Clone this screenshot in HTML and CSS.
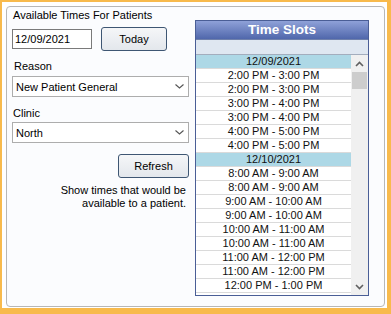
FILE: index.html
```html
<!DOCTYPE html>
<html>
<head>
<meta charset="utf-8">
<link rel="stylesheet" href="styles.css">
</head>
<body>
<div class="frame">
  <div class="panel">
    <div class="left">
      <div class="title">Available Times For Patients</div>
      <div class="date-row">
        <div class="textbox">12/09/2021</div>
        <div class="button today">Today</div>
      </div>
      <div class="label reason-label">Reason</div>
      <div class="combo combo-first">
        <span>New Patient General</span>
        <svg class="chev" width="9" height="5" viewBox="0 0 9 5"><path d="M0.5 0.5 L4.5 4 L8.5 0.5" fill="none" stroke="#555" stroke-width="1.1"/></svg>
      </div>
      <div class="label clinic-label">Clinic</div>
      <div class="combo combo-second">
        <span>North</span>
        <svg class="chev" width="9" height="5" viewBox="0 0 9 5"><path d="M0.5 0.5 L4.5 4 L8.5 0.5" fill="none" stroke="#555" stroke-width="1.1"/></svg>
      </div>
      <div class="button refresh">Refresh</div>
      <div class="note">Show times that would be<br>available to a patient.</div>
    </div>
    <div class="right">
      <div class="grid">
        <div class="grid-title">Time Slots</div>
        <div class="grid-colhead"></div>
        <div class="grid-body">
          <div class="rows">
            <div class="row date">12/09/2021</div>
            <div class="row">2:00 PM - 3:00 PM</div>
            <div class="row">2:00 PM - 3:00 PM</div>
            <div class="row">3:00 PM - 4:00 PM</div>
            <div class="row">3:00 PM - 4:00 PM</div>
            <div class="row">4:00 PM - 5:00 PM</div>
            <div class="row">4:00 PM - 5:00 PM</div>
            <div class="row date">12/10/2021</div>
            <div class="row">8:00 AM - 9:00 AM</div>
            <div class="row">8:00 AM - 9:00 AM</div>
            <div class="row">9:00 AM - 10:00 AM</div>
            <div class="row">9:00 AM - 10:00 AM</div>
            <div class="row">10:00 AM - 11:00 AM</div>
            <div class="row">10:00 AM - 11:00 AM</div>
            <div class="row">11:00 AM - 12:00 PM</div>
            <div class="row">11:00 AM - 12:00 PM</div>
            <div class="row">12:00 PM - 1:00 PM</div>
            <div class="row"></div>
          </div>
          <div class="scrollbar">
            <div class="arrow">
              <svg width="9" height="6" viewBox="0 0 9 6"><path d="M1 5 L4.5 1.5 L8 5" fill="none" stroke="#606060" stroke-width="1.6"/></svg>
            </div>
            <div class="thumb"></div>
            <div class="track"></div>
            <div class="arrow">
              <svg width="9" height="6" viewBox="0 0 9 6"><path d="M1 1 L4.5 4.5 L8 1" fill="none" stroke="#606060" stroke-width="1.6"/></svg>
            </div>
          </div>
        </div>
      </div>
    </div>
  </div>
</div>
</body>
</html>
```
FILE: styles.css
```css
html, body {
  margin: 0;
  padding: 0;
  background: #ffffff;
}

body {
  font-family: "Liberation Sans", Arial, sans-serif;
  font-size: 11px;
  color: #000;
}

.frame {
  width: 391px;
  height: 314px;
  box-sizing: border-box;
  border-style: solid;
  border-color: #f8ba4c;
  border-width: 2px 4px 6px 2px;
  padding: 4px 2px 1px 4px;
  background: #ffffff;
}

.panel {
  height: 100%;
  box-sizing: border-box;
  border: 1px solid #b7b7b7;
  border-radius: 4px;
  background: #fbfcfe;
  display: flex;
  padding: 2px 0 0 5px;
}

.left {
  width: 177px;
  display: flex;
  flex-direction: column;
}

.title {
  line-height: 13px;
  padding-left: 1px;
}

.date-row {
  display: flex;
  align-items: flex-start;
  margin-top: 5px;
}

.textbox {
  width: 80px;
  height: 20px;
  box-sizing: border-box;
  border: 1px solid #7a7a7a;
  background: #fff;
  margin-top: 2px;
  padding-left: 2px;
  line-height: 18px;
}

.button {
  height: 24px;
  box-sizing: border-box;
  border: 1px solid #3e5673;
  border-radius: 3px;
  background: linear-gradient(#f5f6f8, #e3e7ec);
  text-align: center;
  line-height: 22px;
}

.today {
  width: 66px;
  margin-left: 9px;
}

.label {
  line-height: 13px;
  padding-left: 2px;
}

.reason-label {
  margin-top: 9px;
}

.clinic-label {
  margin-top: 10px;
  padding-left: 1px;
}

.combo {
  height: 21px;
  box-sizing: border-box;
  border: 1px solid #adadad;
  background: #fff;
  display: flex;
  align-items: center;
  justify-content: space-between;
  padding: 0 4px 0 3px;
}

.combo-first {
  margin-top: 3px;
}

.combo-second {
  margin-top: 2px;
}

.chev {
  display: block;
}

.refresh {
  width: 71px;
  align-self: flex-end;
  margin-top: 11px;
}

.note {
  margin-top: 6px;
  line-height: 13px;
  text-align: right;
  padding-right: 3px;
}

.right {
  margin-left: 6px;
  margin-top: 11px;
}

.grid {
  width: 174px;
  height: 276px;
  box-sizing: border-box;
  border: 1px solid #4a5e96;
  display: flex;
  flex-direction: column;
  background: #fff;
}

.grid-title {
  height: 18px;
  background: linear-gradient(#8fa1d8, #5067ab);
  color: #fff;
  font-weight: bold;
  font-size: 13.5px;
  line-height: 18px;
  text-align: center;
}

.grid-colhead {
  height: 14px;
  background: #dfe7f1;
  border-top: 1px solid #6f80ab;
  border-bottom: 1px solid #a3adbd;
}

.grid-body {
  flex: 1;
  display: flex;
  overflow: hidden;
}

.rows {
  flex: 1;
  overflow: hidden;
}

.row {
  height: 13px;
  line-height: 13px;
  border-bottom: 1px solid #dadada;
  text-align: center;
  color: #111;
}

.row.date {
  background: #add8e6;
}

.scrollbar {
  width: 17px;
  background: #f0f0f0;
  display: flex;
  flex-direction: column;
  align-items: center;
}

.arrow {
  height: 17px;
  width: 17px;
  display: flex;
  align-items: center;
  justify-content: center;
}

.thumb {
  width: 15px;
  height: 17px;
  background: #cdcdcd;
}

.track {
  flex: 1;
}
```
